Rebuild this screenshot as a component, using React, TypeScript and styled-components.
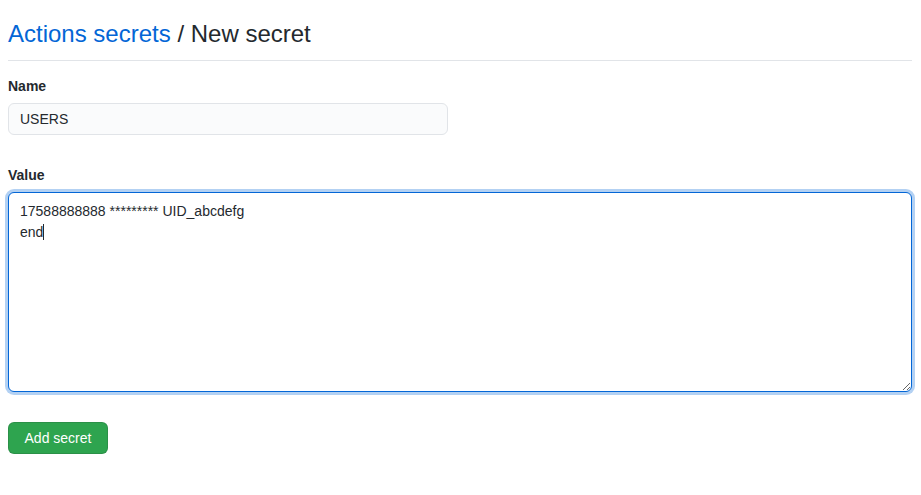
import React from "react";
import styled, { createGlobalStyle } from "styled-components";

const GlobalStyle = createGlobalStyle`
  html, body { margin: 0; padding: 0; background: #ffffff; }
  body {
    font-family: "Liberation Sans", Arial, Helvetica, sans-serif;
    font-size: 14px;
    line-height: 1.5;
    color: #24292e;
  }
  * { box-sizing: border-box; }
`;

const Page = styled.div`
  width: 904px;
  margin-left: 8px;
  padding-top: 16px;
`;

const Subhead = styled.div`
  padding-bottom: 8px;
  border-bottom: 1px solid #e1e4e8;
  margin-bottom: 15px;
`;

const Heading = styled.h2`
  margin: 0;
  font-size: 24px;
  font-weight: 400;
  line-height: 36px;
  color: #24292e;
`;

const Crumb = styled.a`
  color: #0366d6;
  text-decoration: none;
`;

const Form = styled.form`
  display: flex;
  flex-direction: column;
  align-items: flex-start;
`;

const Group = styled.div<{ $gap?: number }>`
  display: flex;
  flex-direction: column;
  align-self: stretch;
  margin-bottom: ${(p) => p.$gap ?? 0}px;
`;

const Label = styled.label`
  font-weight: 700;
  font-size: 14px;
  line-height: 21px;
  margin-bottom: 6px;
`;

const TextInput = styled.input`
  width: 440px;
  height: 32px;
  padding: 5px 11px;
  font-family: inherit;
  font-size: 14px;
  line-height: 20px;
  color: #24292e;
  background: #fafbfc;
  border: 1px solid #e1e4e8;
  border-radius: 6px;
  outline: none;
`;

const AreaWrap = styled.div`
  position: relative;
  width: 904px;
`;

const TextArea = styled.textarea`
  display: block;
  width: 100%;
  height: 200px;
  padding: 8px 11px 4px;
  font-family: inherit;
  font-size: 14px;
  line-height: 21px;
  color: #24292e;
  background: #ffffff;
  border: 1px solid #0366d6;
  border-radius: 6px;
  box-shadow: 0 0 0 3px rgba(3, 102, 214, 0.3);
  outline: none;
  resize: vertical;
`;

const Caret = styled.span`
  position: absolute;
  left: 35px;
  top: 32px;
  width: 1px;
  height: 16px;
  background: #24292e;
`;

const Button = styled.button`
  width: 100px;
  height: 32px;
  padding: 5px 0;
  font-family: inherit;
  font-size: 14px;
  line-height: 20px;
  font-weight: 400;
  color: #ffffff;
  background: #2ea44f;
  border: 1px solid rgba(27, 31, 35, 0.15);
  border-radius: 6px;
  cursor: pointer;
`;

export default function App() {
  return (
    <>
      <GlobalStyle />
      <Page>
        <Subhead>
          <Heading>
            <Crumb href="#">Actions secrets</Crumb> / New secret
          </Heading>
        </Subhead>
        <Form onSubmit={(e) => e.preventDefault()}>
          <Group $gap={30}>
            <Label htmlFor="name">Name</Label>
            <TextInput id="name" defaultValue="USERS" />
          </Group>
          <Group $gap={30}>
            <Label htmlFor="value">Value</Label>
            <AreaWrap>
              <TextArea
                id="value"
                readOnly
                defaultValue={"17588888888 ********* UID_abcdefg\nend"}
              />
              <Caret />
            </AreaWrap>
          </Group>
          <Button type="submit">Add secret</Button>
        </Form>
      </Page>
    </>
  );
}
